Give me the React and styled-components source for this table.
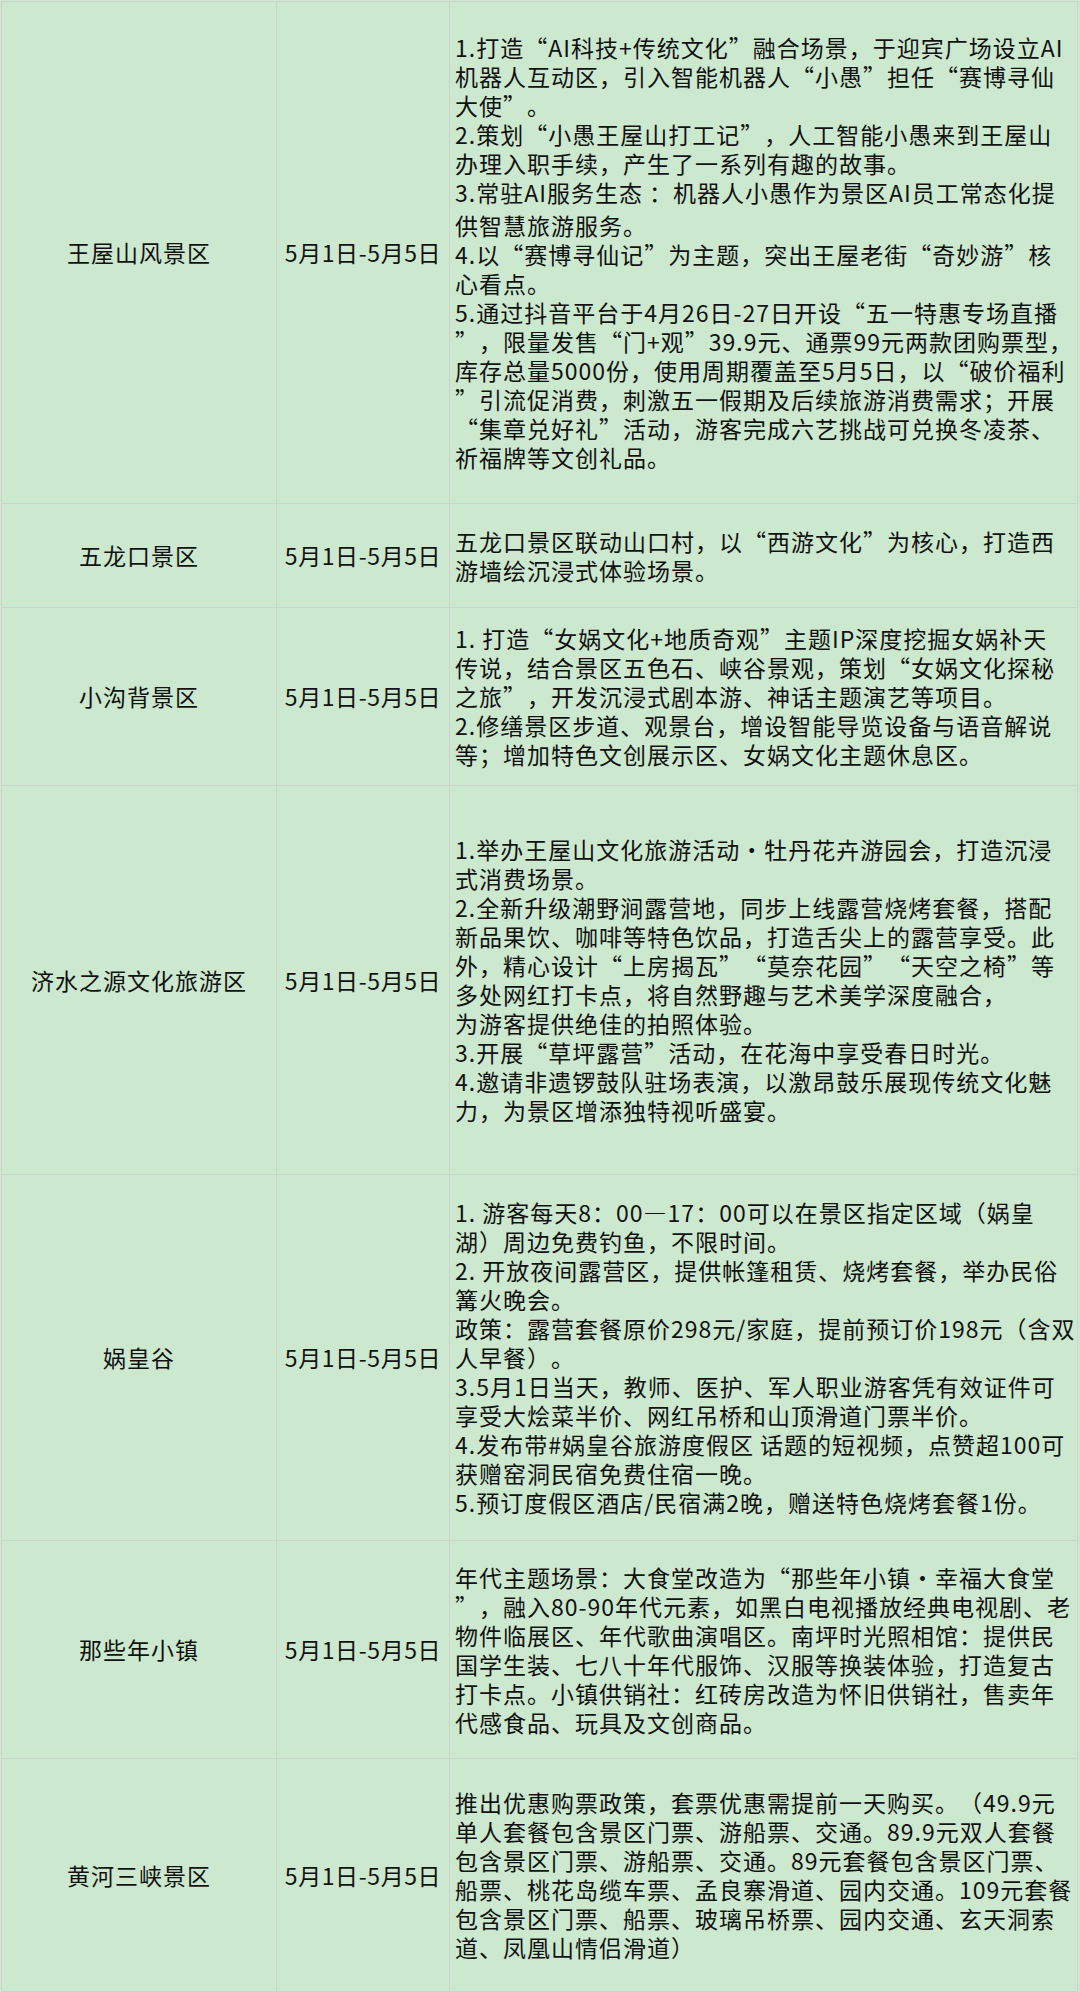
import React from "react";
import styled, { createGlobalStyle } from "styled-components";

const GlobalStyle = createGlobalStyle`
  html, body {
    margin: 0;
    padding: 0;
    background: #cce8cf;
  }
  body {
    font-family: "Noto Sans CJK SC", "Noto Sans", sans-serif;
    color: #121212;
  }
`;

const Sheet = styled.div`
  margin: 1px 0 0 1px;
  width: 1077px;
  border-left: 1px solid #cfd3cf;
  border-top: 1px solid #cfd3cf;
  box-sizing: border-box;
`;

const Row = styled.div`
  display: grid;
  grid-template-columns: 275px 173px 628px;
  height: ${(p) => p.$h}px;
`;

const Cell = styled.div`
  box-sizing: border-box;
  border-right: 1px solid #cfd3cf;
  border-bottom: 1px solid #cfd3cf;
  display: flex;
  align-items: center;
  justify-content: center;
  font-size: 23px;
  letter-spacing: 1px;
  line-height: 29px;
  white-space: nowrap;
  overflow: visible;
  text-spacing-trim: space-all;
`;

const NameCell = styled(Cell)`
  text-align: center;
`;

const DateCell = styled(Cell)`
  letter-spacing: 0.6px;
`;

const DetailCell = styled(Cell)`
  flex-direction: column;
  align-items: flex-start;
  justify-content: center;
  padding: 0 0 0 5px;
`;

const Line = styled.div`
  line-height: 29px;
  margin-top: ${(p) => (p.$gap ? p.$gap : 0)}px;
`;

const DATE = "5月1日-5月5日";

const rows = [
  {
    name: "王屋山风景区",
    h: 502,
    lines: [
      "1.打造“AI科技+传统文化”融合场景，于迎宾广场设立AI",
      "机器人互动区，引入智能机器人“小愚”担任“赛博寻仙",
      "大使”。",
      "2.策划“小愚王屋山打工记”，人工智能小愚来到王屋山",
      "办理入职手续，产生了一系列有趣的故事。",
      "3.常驻AI服务生态 ：机器人小愚作为景区AI员工常态化提",
      ["供智慧旅游服务。", 4],
      "4.以“赛博寻仙记”为主题，突出王屋老街“奇妙游”核",
      "心看点。",
      "5.通过抖音平台于4月26日-27日开设“五一特惠专场直播",
      "”，限量发售“门+观”39.9元、通票99元两款团购票型，",
      "库存总量5000份，使用周期覆盖至5月5日，以“破价福利",
      "”引流促消费，刺激五一假期及后续旅游消费需求；开展",
      "“集章兑好礼”活动，游客完成六艺挑战可兑换冬凌茶、",
      "祈福牌等文创礼品。",
    ],
  },
  {
    name: "五龙口景区",
    h: 104,
    lines: [
      "五龙口景区联动山口村，以“西游文化”为核心，打造西",
      "游墙绘沉浸式体验场景。",
    ],
  },
  {
    name: "小沟背景区",
    h: 178,
    lines: [
      "1. 打造“女娲文化+地质奇观”主题IP深度挖掘女娲补天",
      "传说，结合景区五色石、峡谷景观，策划“女娲文化探秘",
      "之旅”，开发沉浸式剧本游、神话主题演艺等项目。",
      "2.修缮景区步道、观景台，增设智能导览设备与语音解说",
      "等；增加特色文创展示区、女娲文化主题休息区。",
    ],
  },
  {
    name: "济水之源文化旅游区",
    h: 389,
    lines: [
      "1.举办王屋山文化旅游活动•牡丹花卉游园会，打造沉浸",
      "式消费场景。",
      "2.全新升级潮野涧露营地，同步上线露营烧烤套餐，搭配",
      "新品果饮、咖啡等特色饮品，打造舌尖上的露营享受。此",
      "外，精心设计“上房揭瓦”“莫奈花园”“天空之椅”等",
      "多处网红打卡点，将自然野趣与艺术美学深度融合，",
      "为游客提供绝佳的拍照体验。",
      "3.开展“草坪露营”活动，在花海中享受春日时光。",
      "4.邀请非遗锣鼓队驻场表演，以激昂鼓乐展现传统文化魅",
      "力，为景区增添独特视听盛宴。",
    ],
  },
  {
    name: "娲皇谷",
    h: 366,
    lines: [
      "1. 游客每天8：00—17：00可以在景区指定区域（娲皇",
      "湖）周边免费钓鱼，不限时间。",
      "2. 开放夜间露营区，提供帐篷租赁、烧烤套餐，举办民俗",
      "篝火晚会。",
      "政策：露营套餐原价298元/家庭，提前预订价198元（含双",
      "人早餐）。",
      "3.5月1日当天，教师、医护、军人职业游客凭有效证件可",
      "享受大烩菜半价、网红吊桥和山顶滑道门票半价。",
      "4.发布带#娲皇谷旅游度假区 话题的短视频，点赞超100可",
      "获赠窑洞民宿免费住宿一晚。",
      "5.预订度假区酒店/民宿满2晚，赠送特色烧烤套餐1份。",
    ],
  },
  {
    name: "那些年小镇",
    h: 218,
    lines: [
      "年代主题场景：大食堂改造为“那些年小镇•幸福大食堂",
      "”，融入80-90年代元素，如黑白电视播放经典电视剧、老",
      "物件临展区、年代歌曲演唱区。南坪时光照相馆：提供民",
      "国学生装、七八十年代服饰、汉服等换装体验，打造复古",
      "打卡点。小镇供销社：红砖房改造为怀旧供销社，售卖年",
      "代感食品、玩具及文创商品。",
    ],
  },
  {
    name: "黄河三峡景区",
    h: 233,
    lines: [
      "推出优惠购票政策，套票优惠需提前一天购买。（49.9元",
      "单人套餐包含景区门票、游船票、交通。89.9元双人套餐",
      "包含景区门票、游船票、交通。89元套餐包含景区门票、",
      "船票、桃花岛缆车票、孟良寨滑道、园内交通。109元套餐",
      "包含景区门票、船票、玻璃吊桥票、园内交通、玄天洞索",
      "道、凤凰山情侣滑道）",
    ],
  },
];

export default function App() {
  return (
    <>
      <GlobalStyle />
      <Sheet lang="zh-CN">
        {rows.map((r) => (
          <Row key={r.name} $h={r.h}>
            <NameCell>{r.name}</NameCell>
            <DateCell>{DATE}</DateCell>
            <DetailCell>
              {r.lines.map((l, i) => {
                const text = Array.isArray(l) ? l[0] : l;
                const gap = Array.isArray(l) ? l[1] : 0;
                return (
                  <Line key={i} $gap={gap}>
                    {text}
                  </Line>
                );
              })}
            </DetailCell>
          </Row>
        ))}
      </Sheet>
    </>
  );
}
